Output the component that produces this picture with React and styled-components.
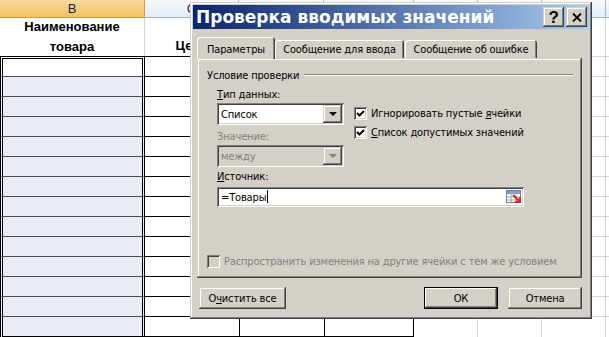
import React from "react";
import styled, { createGlobalStyle, css } from "styled-components";

const GlobalStyle = createGlobalStyle`
  html, body { margin: 0; padding: 0; background: #fff; }
  body { width: 609px; height: 337px; overflow: hidden; }
`;

const Screen = styled.div`
  position: relative;
  width: 609px;
  height: 337px;
  overflow: hidden;
  background: #fff;
  font-family: "Liberation Sans", Arial, sans-serif;
`;

/* ---------- spreadsheet ---------- */

const Sheet = styled.div`
  display: grid;
  grid-template-columns: 145px 94px 85px 90px 64px 64px 64px 64px;
  grid-template-rows: 18px 38px repeat(13, 20px) 21px;
`;

const ColHead = styled.div`
  box-sizing: border-box;
  display: flex;
  align-items: center;
  justify-content: center;
  font-size: 13px;
  color: #15284b;
  overflow: hidden;
  border-right: 1px solid ${({ $active }) => ($active ? "#f29536" : "#9eb6ce")};
  border-bottom: 1px solid ${({ $active }) => ($active ? "#f29536" : "#9eb6ce")};
  background: ${({ $active }) =>
    $active
      ? "linear-gradient(#f9d99f, #f1c15f)"
      : "linear-gradient(#f7f9fc, #e4ecf7)"};
`;

const TitleCell = styled.div`
  box-sizing: border-box;
  display: flex;
  flex-direction: column;
  align-items: center;
  justify-content: ${({ $bottom }) => ($bottom ? "flex-end" : "center")};
  font-size: 13px;
  font-weight: bold;
  line-height: 20px;
  color: #000;
  border-right: 1px solid #d0d7e5;
`;

const NameCell = styled.div`
  box-sizing: border-box;
  background: ${({ $first }) => ($first ? "#fff" : "#e8ebf4")};
  border-left: 3px double #000;
  border-right: 3px double #000;
  border-top: ${({ $first }) => ($first ? "3px double #000" : "1px solid #4a4e5c")};
  ${({ $last }) =>
    $last &&
    css`
      border-bottom: 1px solid #000;
    `}
`;

const TableCell = styled.div`
  box-sizing: border-box;
  border-top: 1px solid #000;
  ${({ $edge }) =>
    $edge &&
    css`
      border-right: 1px solid #000;
    `}
  ${({ $inner }) =>
    $inner &&
    css`
      border-left: 1px solid #000;
    `}
  ${({ $last }) =>
    $last &&
    css`
      border-bottom: 1px solid #000;
    `}
`;

const GridCell = styled.div`
  box-sizing: border-box;
  border-top: 1px solid #d0d7e5;
  border-right: 1px solid #d0d7e5;
`;

const PlainCell = styled.div`
  box-sizing: border-box;
  border-right: 1px solid #d0d7e5;
`;

/* ---------- dialog ---------- */

const raised = css`
  box-shadow: inset -1px -1px #404040, inset 1px 1px #d4d0c8,
    inset -2px -2px #808080, inset 2px 2px #ffffff;
`;

const sunken = css`
  box-shadow: inset 1px 1px #808080, inset -1px -1px #ffffff,
    inset 2px 2px #404040, inset -2px -2px #d4d0c8;
`;

const Dialog = styled.div`
  position: absolute;
  left: 190px;
  top: 2px;
  width: 402px;
  height: 317px;
  box-sizing: border-box;
  padding: 3px;
  background: #d4d0c8;
  ${raised};
  display: flex;
  flex-direction: column;
  font-family: "DejaVu Sans Condensed", "Liberation Sans", Arial, sans-serif;
  font-size: 11px;
  letter-spacing: -0.15px;
  color: #000;
`;

const TitleBar = styled.div`
  height: 24px;
  display: flex;
  align-items: center;
  padding: 0 2px 0 3px;
  background: linear-gradient(90deg, #0a246a, #a6caf0);
`;

const TitleText = styled.div`
  flex: 1;
  color: #fff;
  font-family: "DejaVu Sans", Verdana, sans-serif;
  font-weight: bold;
  font-size: 17px;
  letter-spacing: 0;
  white-space: nowrap;
`;

const CaptionButton = styled.div`
  width: 21px;
  height: 20px;
  box-sizing: border-box;
  margin-left: 2px;
  background: #d4d0c8;
  ${raised};
  display: flex;
  align-items: center;
  justify-content: center;
  font-family: "Liberation Sans", Arial, sans-serif;
  font-weight: bold;
  font-size: 17px;
  line-height: 1;
`;

const Body = styled.div`
  display: flex;
  flex-direction: column;
  padding: 8px 7px 0 4px;
`;

const Tabs = styled.div`
  display: flex;
  align-items: flex-end;
  height: 21px;
  position: relative;
  z-index: 1;
`;

const Tab = styled.div`
  box-sizing: border-box;
  width: ${({ $w }) => $w}px;
  height: ${({ $active }) => ($active ? 22 : 18)}px;
  margin-right: ${({ $gap }) => $gap || 0}px;
  margin-bottom: ${({ $active }) => ($active ? -1 : 0)}px;
  padding-top: ${({ $active }) => ($active ? 3 : 1)}px;
  background: #d4d0c8;
  border-radius: 3px 3px 0 0;
  box-shadow: inset 1px 1px #ffffff, inset -1px 0 #404040, inset -2px 0 #808080;
  display: flex;
  align-items: center;
  justify-content: center;
  white-space: nowrap;
  ${({ $active }) =>
    !$active &&
    css`
      padding-bottom: 1px;
    `}
`;

const Panel = styled.div`
  height: 220px;
  box-sizing: border-box;
  ${raised};
  display: flex;
  flex-direction: column;
  padding: 10px 9px 10px 10px;
`;

const GroupHeader = styled.div`
  display: flex;
  align-items: center;
  gap: 5px;
  height: 14px;
  white-space: nowrap;
`;

const EtchedLine = styled.div`
  flex: 1;
  height: 1px;
  background: #808080;
  border-bottom: 1px solid #fff;
`;

const Fields = styled.div`
  display: grid;
  grid-template-columns: 127px 1fr;
  column-gap: 10px;
  padding-left: 10px;
  margin-top: 6px;
`;

const Column = styled.div`
  display: flex;
  flex-direction: column;
  padding-top: ${({ $pad }) => $pad || 0}px;
  gap: ${({ $gap }) => $gap || 0}px;
`;

const Label = styled.div`
  height: 14px;
  line-height: 14px;
  white-space: nowrap;
  margin-top: ${({ $mt }) => $mt || 0}px;
  padding-left: ${({ $indent }) => $indent || 0}px;
  color: ${({ $disabled }) => ($disabled ? "#808080" : "#000")};
`;

const Select = styled.div`
  box-sizing: border-box;
  height: 22px;
  margin-top: 1px;
  padding: 2px;
  display: flex;
  align-items: center;
  background: ${({ $disabled }) => ($disabled ? "#d4d0c8" : "#fff")};
  color: ${({ $disabled }) => ($disabled ? "#808080" : "#000")};
  ${sunken};
`;

const SelectValue = styled.div`
  flex: 1;
  padding-left: 2px;
`;

const DropButton = styled.div`
  width: 19px;
  height: 18px;
  box-sizing: border-box;
  background: #d4d0c8;
  ${raised};
  display: flex;
  align-items: center;
  justify-content: center;
`;

const Arrow = styled.div`
  width: 0;
  height: 0;
  border-left: 4px solid transparent;
  border-right: 4px solid transparent;
  border-top: 4px solid ${({ $disabled }) => ($disabled ? "#808080" : "#000")};
`;

const SourceInput = styled.div`
  box-sizing: border-box;
  width: 307px;
  height: 20px;
  margin-top: 3px;
  margin-left: 10px;
  padding: 2px 2px 2px 4px;
  background: #fff;
  display: flex;
  align-items: center;
  ${sunken};
`;

const Caret = styled.span`
  display: inline-block;
  width: 1px;
  height: 13px;
  background: #000;
  margin-left: 1px;
  vertical-align: -2px;
`;

const InputText = styled.div`
  flex: 1;
`;

const CheckRow = styled.div`
  display: flex;
  align-items: center;
  gap: 4px;
  height: 13px;
  white-space: nowrap;
  color: ${({ $disabled }) => ($disabled ? "#808080" : "#000")};
  margin-top: ${({ $auto }) => ($auto ? "auto" : "0")};
`;

const Box = styled.div`
  flex-shrink: 0;
  width: 13px;
  height: 13px;
  box-sizing: border-box;
  background: ${({ $disabled }) => ($disabled ? "#d4d0c8" : "#fff")};
  ${sunken};
  display: flex;
  align-items: center;
  justify-content: center;
`;

const Buttons = styled.div`
  display: flex;
  margin-top: 9px;
  padding-left: 2px;
`;

const Button = styled.div`
  box-sizing: border-box;
  width: ${({ $w }) => $w}px;
  height: 22px;
  margin-left: ${({ $ml }) => $ml || 0}px;
  background: #d4d0c8;
  display: flex;
  align-items: center;
  justify-content: center;
  white-space: nowrap;
  ${({ $default }) =>
    $default
      ? css`
          box-shadow: inset 0 0 0 1px #000, inset -2px -2px #404040,
            inset 2px 2px #ffffff, inset -3px -3px #808080;
        `
      : raised};
`;

const CheckMark = () => (
  <svg width="9" height="9" viewBox="0 0 9 9">
    <path d="M1 4 L3.5 6.5 L8 2" fill="none" stroke="#000" strokeWidth="2" />
  </svg>
);

const CloseGlyph = () => (
  <svg width="10" height="9" viewBox="0 0 10 9">
    <path d="M1 0.5 L9 8.5 M9 0.5 L1 8.5" stroke="#000" strokeWidth="1.8" />
  </svg>
);

const RefEditIcon = () => (
  <svg width="16" height="16" viewBox="0 0 16 16">
    <rect x="0.5" y="1.5" width="14" height="12" fill="#fff" stroke="#6d7f96" />
    <rect x="1" y="2" width="13" height="3" fill="#7fa0cf" />
    <path d="M1 8 H14 M1 11 H14 M5 2 V13 M10 2 V13" stroke="#9aa7b8" strokeWidth="1" />
    <path d="M7 6 L13 12 M9 13 H14 V8" stroke="#d9221c" strokeWidth="2" fill="none" />
  </svg>
);

// only B and C headers show; the rest sit under the dialog
const columns = [
  { id: "B", label: "B" },
  { id: "C", label: "C" },
  { id: "D" },
  { id: "E" },
  { id: "F" },
  { id: "G" },
  { id: "H" },
  { id: "I" },
];
const rows = Array.from({ length: 14 }, (_, i) => i);

export default function App() {
  return (
    <Screen>
      <GlobalStyle />
      <Sheet>
        {columns.map((c) => (
          <ColHead key={c.id} $active={c.id === "B"}>
            {c.label}
          </ColHead>
        ))}

        <TitleCell>
          <span>Наименование</span>
          <span>товара</span>
        </TitleCell>
        <TitleCell $bottom>
          <span>Цена</span>
        </TitleCell>
        {columns.slice(2).map((c) => (
          <PlainCell key={c.id} />
        ))}

        {rows.map((r) => {
          const last = r === rows.length - 1;
          return (
            <React.Fragment key={r}>
              <NameCell $first={r === 0} $last={last} />
              <TableCell $last={last} />
              <TableCell $inner $last={last} />
              <TableCell $inner $edge $last={last} />
              <GridCell />
              <GridCell />
              <GridCell />
              <GridCell />
            </React.Fragment>
          );
        })}
      </Sheet>

      <Dialog>
        <TitleBar>
          <TitleText>Проверка вводимых значений</TitleText>
          <CaptionButton>?</CaptionButton>
          <CaptionButton>
            <CloseGlyph />
          </CaptionButton>
        </TitleBar>

        <Body>
          <Tabs>
            <Tab $active $w={78}>Параметры</Tab>
            <Tab $w={129} $gap={1}>Сообщение для ввода</Tab>
            <Tab $w={132}>Сообщение об ошибке</Tab>
          </Tabs>

          <Panel>
            <GroupHeader>
              Условие проверки
              <EtchedLine />
            </GroupHeader>

            <Fields>
              <Column>
                <Label>
                  <u>Т</u>ип данных:
                </Label>
                <Select>
                  <SelectValue>Список</SelectValue>
                  <DropButton>
                    <Arrow />
                  </DropButton>
                </Select>
                <Label $mt={5} $disabled>
                  Значение:
                </Label>
                <Select $disabled>
                  <SelectValue>между</SelectValue>
                  <DropButton>
                    <Arrow $disabled />
                  </DropButton>
                </Select>
              </Column>
              <Column $pad={19} $gap={6}>
                <CheckRow>
                  <Box>
                    <CheckMark />
                  </Box>
                  <span>
                    Игнорировать пустые <u>я</u>чейки
                  </span>
                </CheckRow>
                <CheckRow>
                  <Box>
                    <CheckMark />
                  </Box>
                  <span>
                    <u>С</u>писок допустимых значений
                  </span>
                </CheckRow>
              </Column>
            </Fields>

            <Label $mt={3} $indent={10}>
              <u>И</u>сточник:
            </Label>
            <SourceInput>
              <InputText>
                =Товары
                <Caret />
              </InputText>
              <RefEditIcon />
            </SourceInput>

            <CheckRow $auto $disabled>
              <Box $disabled />
              <span>Распространить изменения на другие ячейки с тем же условием</span>
            </CheckRow>
          </Panel>

          <Buttons>
            <Button $w={87}>
              О<u>ч</u>истить все
            </Button>
            <Button $w={74} $ml={138} $default>
              ОК
            </Button>
            <Button $w={74} $ml={10}>
              Отмена
            </Button>
          </Buttons>
        </Body>
      </Dialog>
    </Screen>
  );
}
